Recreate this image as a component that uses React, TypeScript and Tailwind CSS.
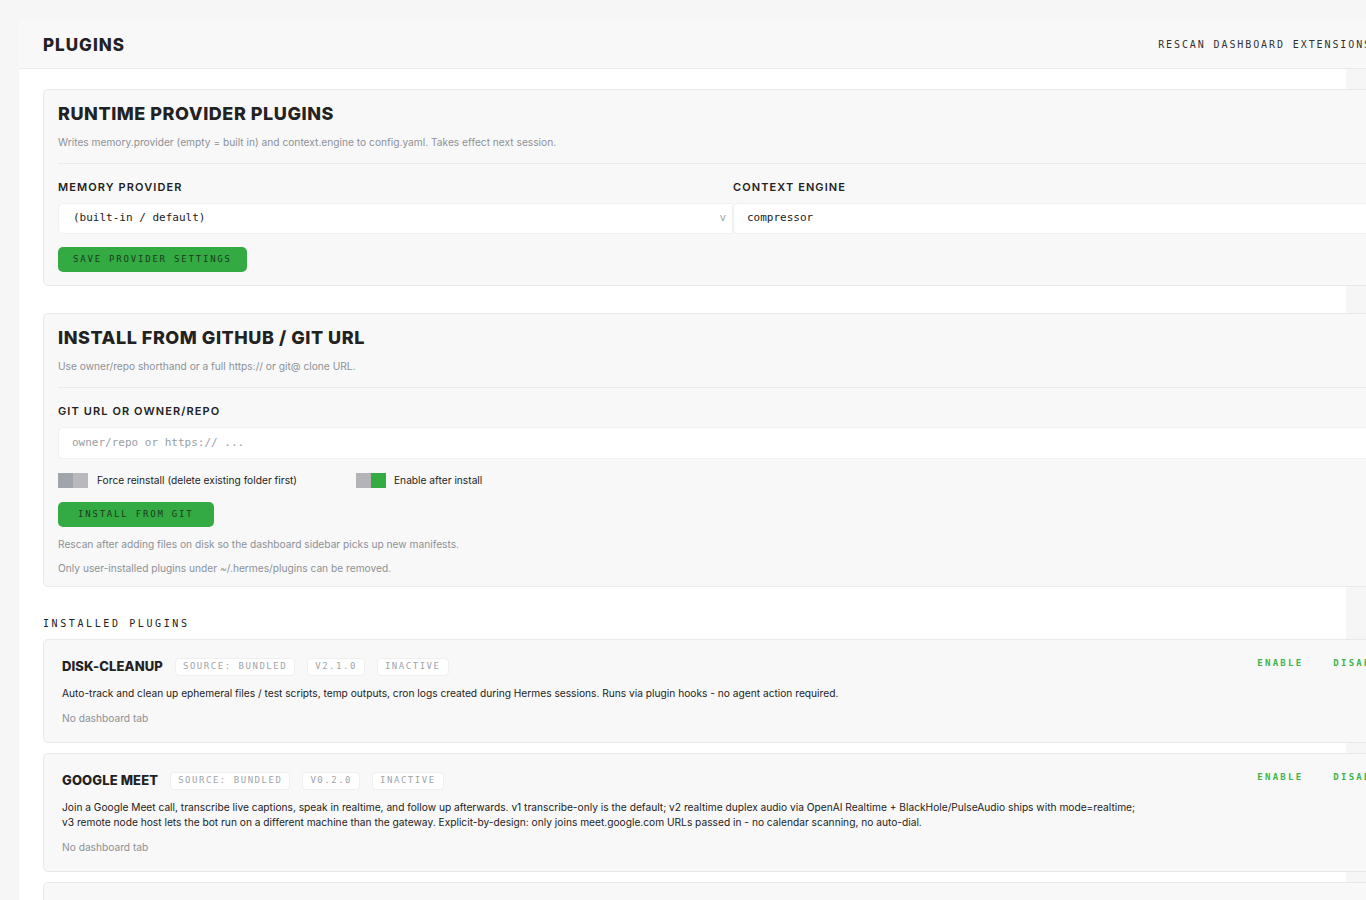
import React from 'react';

const sans = { fontFamily: 'Inter, "Noto Sans", sans-serif' };
const mono = { fontFamily: '"DejaVu Sans Mono", "Liberation Mono", monospace' };

interface Plugin {
  name: string;
  source: string;
  version: string;
  status: string;
  description: string;
  error?: string;
}

const plugins: Plugin[] = [
  {
    name: 'DISK-CLEANUP',
    source: 'SOURCE: BUNDLED',
    version: 'V2.1.0',
    status: 'INACTIVE',
    description:
      'Auto-track and clean up ephemeral files / test scripts, temp outputs, cron logs created during Hermes sessions. Runs via plugin hooks - no agent action required.',
  },
  {
    name: 'GOOGLE MEET',
    source: 'SOURCE: BUNDLED',
    version: 'V0.2.0',
    status: 'INACTIVE',
    description:
      'Join a Google Meet call, transcribe live captions, speak in realtime, and follow up afterwards. v1 transcribe-only is the default; v2 realtime duplex audio via OpenAI Realtime + BlackHole/PulseAudio ships with mode=realtime; v3 remote node host lets the bot run on a different machine than the gateway. Explicit-by-design: only joins meet.google.com URLs passed in - no calendar scanning, no auto-dial.',
  },
  {
    name: 'HONCHO',
    source: 'SOURCE: GITHUB',
    version: 'V0.10',
    status: 'ENABLED',
    description: 'Memory provider backed by Honcho.',
    error: 'MISSING DEPS',
  },
];

function GreenButton({ children, wide }: { children: React.ReactNode; wide?: boolean }) {
  return (
    <button
      className={
        wide
          ? 'h-[25px] rounded-[5px] bg-[#33aa42] px-[20px] text-[9px] uppercase tracking-[0.2em] text-[#1c3a1f]'
          : 'h-[25px] rounded-[5px] bg-[#33aa42] px-[15px] text-[9px] uppercase tracking-[0.2em] text-[#1c3a1f]'
      }
      style={mono}
    >
      {children}
    </button>
  );
}

function Toggle({ on }: { on: boolean }) {
  return (
    <span className="flex h-[15px] w-[30px] shrink-0">
      {on ? (
        <>
          <span className="h-full w-1/2 bg-[#b3b3b8]" />
          <span className="h-full w-1/2 bg-[#33aa42]" />
        </>
      ) : (
        <>
          <span className="h-full w-1/2 bg-[#9fa5aa]" />
          <span className="h-full w-1/2 bg-[#b9b9bd]" />
        </>
      )}
    </span>
  );
}

function Badge({ children, error }: { children: React.ReactNode; error?: boolean }) {
  return (
    <span
      className={
        error
          ? 'flex h-[18px] items-center rounded-[4px] border border-[#e26060] bg-[#e26060] px-[7px] text-[9px] tracking-[0.17em] text-white'
          : 'flex h-[18px] items-center rounded-[4px] border border-[#efefef] bg-white px-[7px] text-[9px] tracking-[0.17em] text-[#a0a4a9]'
      }
      style={mono}
    >
      {children}
    </span>
  );
}

export default function App() {
  return (
    <div className="min-h-screen overflow-hidden bg-[#f6f6f6] pt-[20px] pl-[19px]" style={sans}>
      <div className="w-[1327px] bg-white pb-10">
        <div className="w-[1420px]">
          {/* Header */}
          <div className="flex h-[49px] items-center justify-between border-b border-[#e8eaed] bg-[#f8f8f8] px-[24px]">
            <h1 className="mt-[3px] text-[17px] font-extrabold tracking-[0.06em] text-[#222]">PLUGINS</h1>
            <button className="mr-[43px] text-[10px] tracking-[0.19em] text-[#333]" style={mono}>
              RESCAN DASHBOARD EXTENSIONS
            </button>
          </div>

          <div className="px-[24px] pt-[20px]">
            {/* Runtime provider plugins */}
            <section className="w-[1380px] rounded-[5px] border border-[#e9e9e9] bg-[#f8f8f8] px-[14px] pt-[14px] pb-[13px]">
              <h2 className="text-[18px] font-extrabold leading-[20px] tracking-[0.03em] text-[#222]">
                RUNTIME PROVIDER PLUGINS
              </h2>
              <p className="mt-[10px] text-[10.2px] leading-[16px] text-[#8c9197]">
                Writes memory.provider (empty = built in) and context.engine to config.yaml. Takes effect next session.
              </p>
              <div className="mt-[13px] border-t border-[#eaeaea]" />
              <div className="mt-[15px] grid grid-cols-2">
                <div>
                  <div className="text-[11px] font-semibold leading-[16px] tracking-[0.1em] text-[#222]">
                    MEMORY PROVIDER
                  </div>
                  <div className="mt-[8px] flex h-[31px] items-center justify-between rounded-l-[5px] border border-[#f0f0f0] bg-white pl-[14px] pr-[6px]">
                    <span className="text-[11px] text-[#222]" style={mono}>
                      (built-in / default)
                    </span>
                    <span className="text-[11px] text-[#a0a4a9]" style={mono}>
                      v
                    </span>
                  </div>
                </div>
                <div>
                  <div className="text-[11px] font-semibold leading-[16px] tracking-[0.1em] text-[#222]">
                    CONTEXT ENGINE
                  </div>
                  <div className="mt-[8px] flex h-[31px] items-center rounded-l-[5px] border border-[#f0f0f0] bg-white pl-[13px]">
                    <span className="text-[11px] text-[#222]" style={mono}>
                      compressor
                    </span>
                  </div>
                </div>
              </div>
              <div className="mt-[13px] flex">
                <GreenButton>SAVE PROVIDER SETTINGS</GreenButton>
              </div>
            </section>

            {/* Install from git */}
            <section className="mt-[27px] w-[1380px] rounded-[5px] border border-[#e9e9e9] bg-[#f8f8f8] px-[14px] pt-[14px] pb-[10px]">
              <h2 className="text-[18px] font-extrabold leading-[20px] tracking-[0.03em] text-[#222]">
                INSTALL FROM GITHUB / GIT URL
              </h2>
              <p className="mt-[10px] text-[10.2px] leading-[16px] text-[#8c9197]">
                Use owner/repo shorthand or a full https:// or git@ clone URL.
              </p>
              <div className="mt-[13px] border-t border-[#eaeaea]" />
              <div className="mt-[15px] text-[11px] font-semibold leading-[16px] tracking-[0.1em] text-[#222]">
                GIT URL OR OWNER/REPO
              </div>
              <div className="mt-[8px] flex h-[32px] items-center rounded-l-[5px] border border-[#f0f0f0] bg-white pl-[13px]">
                <span className="text-[11px] text-[#9a9ea3]" style={mono}>
                  owner/repo or https:// ...
                </span>
              </div>
              <div className="mt-[14px] flex h-[15px] items-center">
                <label className="flex w-[298px] items-center gap-[9px] text-[10.2px] leading-[15px] text-[#222]">
                  <Toggle on={false} />
                  Force reinstall (delete existing folder first)
                </label>
                <label className="flex items-center gap-[8px] text-[10.2px] leading-[15px] text-[#222]">
                  <Toggle on />
                  Enable after install
                </label>
              </div>
              <div className="mt-[14px] flex">
                <GreenButton wide>INSTALL FROM GIT</GreenButton>
              </div>
              <p className="mt-[9px] text-[10.2px] leading-[16px] text-[#8c9197]">
                Rescan after adding files on disk so the dashboard sidebar picks up new manifests.
              </p>
              <p className="mt-[8px] text-[10.2px] leading-[16px] text-[#8c9197]">
                Only user-installed plugins under ~/.hermes/plugins can be removed.
              </p>
            </section>

            {/* Installed plugins */}
            <h3 className="mt-[30px] text-[10px] leading-[14px] tracking-[0.26em] text-[#222]" style={mono}>
              INSTALLED PLUGINS
            </h3>
            <div className="mt-[8px] flex flex-col gap-[10px]">
              {plugins.map((p) => (
                <div
                  key={p.name}
                  className="flex w-[1380px] rounded-[5px] border border-[#e9e9e9] bg-[#f8f8f8] pl-[18px] pr-[35px] pt-[17px] pb-[16px]"
                >
                  <div className="flex-1 pt-[1px]">
                    <div className="flex h-[18px] items-center gap-[12px]">
                      <span className="text-[13px] font-extrabold tracking-[0.01em] text-[#222]">{p.name}</span>
                      <Badge>{p.source}</Badge>
                      <Badge>{p.version}</Badge>
                      <Badge>{p.status}</Badge>
                      {p.error && <Badge error>{p.error}</Badge>}
                    </div>
                    <p className="mt-[10px] max-w-[1082px] text-[10.2px] leading-[15px] text-[#222]">
                      {p.description}
                    </p>
                    <p className="mt-[10px] text-[10.2px] leading-[15px] text-[#8c9197]">No dashboard tab</p>
                  </div>
                  <div className="mt-[-1px] flex items-start gap-[30px]">
                    <button className="text-[9px] font-bold leading-[14px] tracking-[0.25em] text-[#3cb54b]" style={mono}>
                      ENABLE
                    </button>
                    <button className="text-[9px] font-bold leading-[14px] tracking-[0.25em] text-[#3cb54b]" style={mono}>
                      DISABLE
                    </button>
                  </div>
                </div>
              ))}
            </div>
          </div>
        </div>
      </div>
    </div>
  );
}
